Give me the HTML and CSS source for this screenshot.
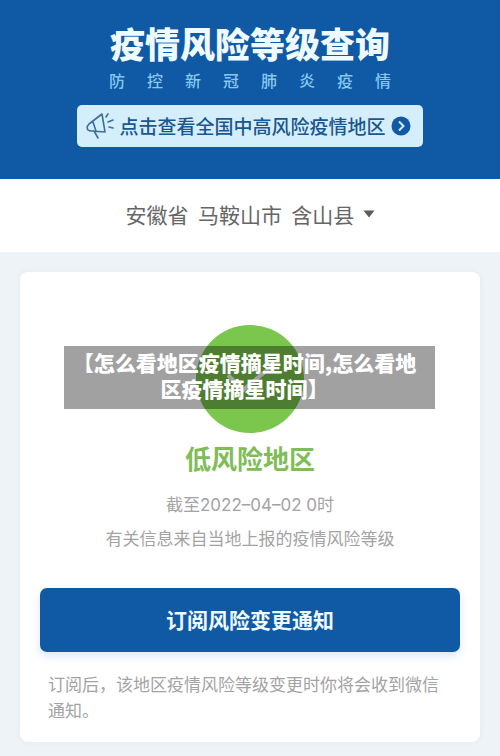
FILE: index.html
```html
<!DOCTYPE html>
<html lang="zh-CN">
<head>
    <meta charset="UTF-8">
    <meta name="viewport" content="width=device-width, initial-scale=1.0">
    <title>疫情风险等级查询</title>
    <link rel="stylesheet" href="styles.css">
</head>
<body>
    <header class="header">
        <h1 class="title">疫情风险等级查询</h1>
        <p class="subtitle">防控新冠肺炎疫情</p>
        <a class="banner" href="#">
            <svg class="horn" viewBox="0 0 28 28" aria-hidden="true">
                <path d="M16 2 L3 12 Q0 15 2 18 Q3 19 6 19 L19 20 Z M7 10 L10 19 M8 19 L12 26"/>
                <path d="M20 5 L22 2 M22 10 L27 8 M23 15 L27 16"/>
            </svg>
            <span>点击查看全国中高风险疫情地区</span>
            <svg class="go" viewBox="0 0 20 20" aria-hidden="true">
                <circle cx="10" cy="10" r="9.5"/>
                <path d="M8 5.5 L12.5 10 L8 14.5"/>
            </svg>
        </a>
    </header>

    <div class="region">
        <label class="region-label">
            <select class="region-select" name="region" aria-label="选择地区">
                <option>安徽省&nbsp;&nbsp;马鞍山市&nbsp;&nbsp;含山县</option>
            </select>
            <svg class="caret" viewBox="0 0 12 8" aria-hidden="true"><path d="M0.5 0.5 H11.5 L6 7.5 Z"/></svg>
        </label>
    </div>

    <main class="card">
        <div class="status">
            <svg class="check" viewBox="0 0 108 108" aria-hidden="true">
                <circle cx="54" cy="54" r="54"/>
                <path d="M32 50 L47 65 L76 41"/>
            </svg>
            <p class="caption">【怎么看地区疫情摘星时间,怎么看地区疫情摘星时间】</p>
        </div>
        <h2 class="level">低风险地区</h2>
        <p class="info date">截至2022–04–02 0时</p>
        <p class="info">有关信息来自当地上报的疫情风险等级</p>
        <button type="button" class="subscribe">订阅风险变更通知</button>
        <p class="note">订阅后，该地区疫情风险等级变更时你将会收到微信通知。</p>
    </main>
</body>
</html>
```
FILE: styles.css
```css
* {
    box-sizing: border-box;
}
body {
    margin: 0;
    background-color: #eef3f7;
    font-family: "Noto Sans CJK SC", sans-serif;
}
h1, h2, p {
    margin: 0;
}

/* blue top */
.header {
    display: flex;
    flex-direction: column;
    align-items: center;
    padding: 23px 20px 32px;
    background-color: #1059a5;
}
.title {
    font-size: 35px;
    line-height: 40px;
    font-weight: 900;
    color: #eefaff;
}
.subtitle {
    width: 282px;
    margin-top: 5px;
    font-size: 16px;
    line-height: 24px;
    font-weight: 500;
    text-align-last: justify;
    color: #86c8ef;
}
.banner {
    display: flex;
    align-items: center;
    gap: 5px;
    height: 42px;
    margin-top: 13px;
    padding: 0 12px 0 9px;
    border-radius: 5px;
    background-color: #d5eefc;
    color: #1b578f;
    font-size: 19px;
    line-height: 26px;
    font-weight: 500;
    text-decoration: none;
    white-space: nowrap;
}
.horn {
    width: 28px;
    height: 28px;
    fill: none;
    stroke: #3b6f9c;
    stroke-width: 1.6;
    stroke-linecap: round;
    stroke-linejoin: round;
}
.go {
    width: 20px;
    height: 20px;
    fill: #1059a5;
}
.go path {
    fill: none;
    stroke: #d5eefc;
    stroke-width: 2;
}

/* region picker */
.region {
    display: flex;
    justify-content: center;
    padding: 19px 0 22px;
    background-color: #fff;
}
.region-label {
    display: flex;
    align-items: center;
    gap: 8px;
}
.region-select {
    appearance: none;
    padding: 0;
    border: none;
    background: none;
    color: #666;
    font-family: inherit;
    font-size: 21px;
    line-height: 32px;
}
.caret {
    width: 12px;
    height: 8px;
    fill: #5c5c5c;
}

/* result card */
.card {
    margin: 20px 20px 14px;
    padding: 53px 20px 19px;
    border-radius: 8px;
    background-color: #fff;
    box-shadow: 0 0 6px rgba(60, 90, 110, 0.06);
    text-align: center;
}
.status {
    position: relative;
    display: flex;
    justify-content: center;
}
.check {
    width: 108px;
    height: 108px;
    fill: #7bc74d;
}
.check path {
    fill: none;
    stroke: #fff;
    stroke-width: 4;
}
.caption {
    position: absolute;
    top: 21px;
    left: 24px;
    right: 25px;
    padding: 3px 14px 8px 4px;
    background-color: rgba(0, 0, 0, 0.37);
    color: #fff;
    font-size: 21px;
    line-height: 26px;
    font-weight: 900;
}
.level {
    margin-top: 7px;
    font-size: 26px;
    line-height: 36px;
    font-weight: 700;
    color: #7fbd57;
}
.info {
    font-size: 17px;
    line-height: 26px;
    color: #a3a3a3;
}
.date {
    margin: 16px 0 7px;
    font-family: Inter, "Noto Sans CJK SC", sans-serif;
}
.subscribe {
    display: block;
    width: 100%;
    height: 64px;
    margin-top: 37px;
    padding: 0 0 3px;
    border: none;
    border-radius: 7px;
    background-color: #1059a5;
    box-shadow: 0 4px 10px rgba(60, 110, 230, 0.18);
    color: #eefaff;
    font-family: inherit;
    font-size: 21px;
    font-weight: 700;
    cursor: pointer;
}
.note {
    margin-top: 19px;
    padding: 0 8px;
    font-size: 17px;
    line-height: 26px;
    text-align: left;
    color: #a3a3a3;
}
```
